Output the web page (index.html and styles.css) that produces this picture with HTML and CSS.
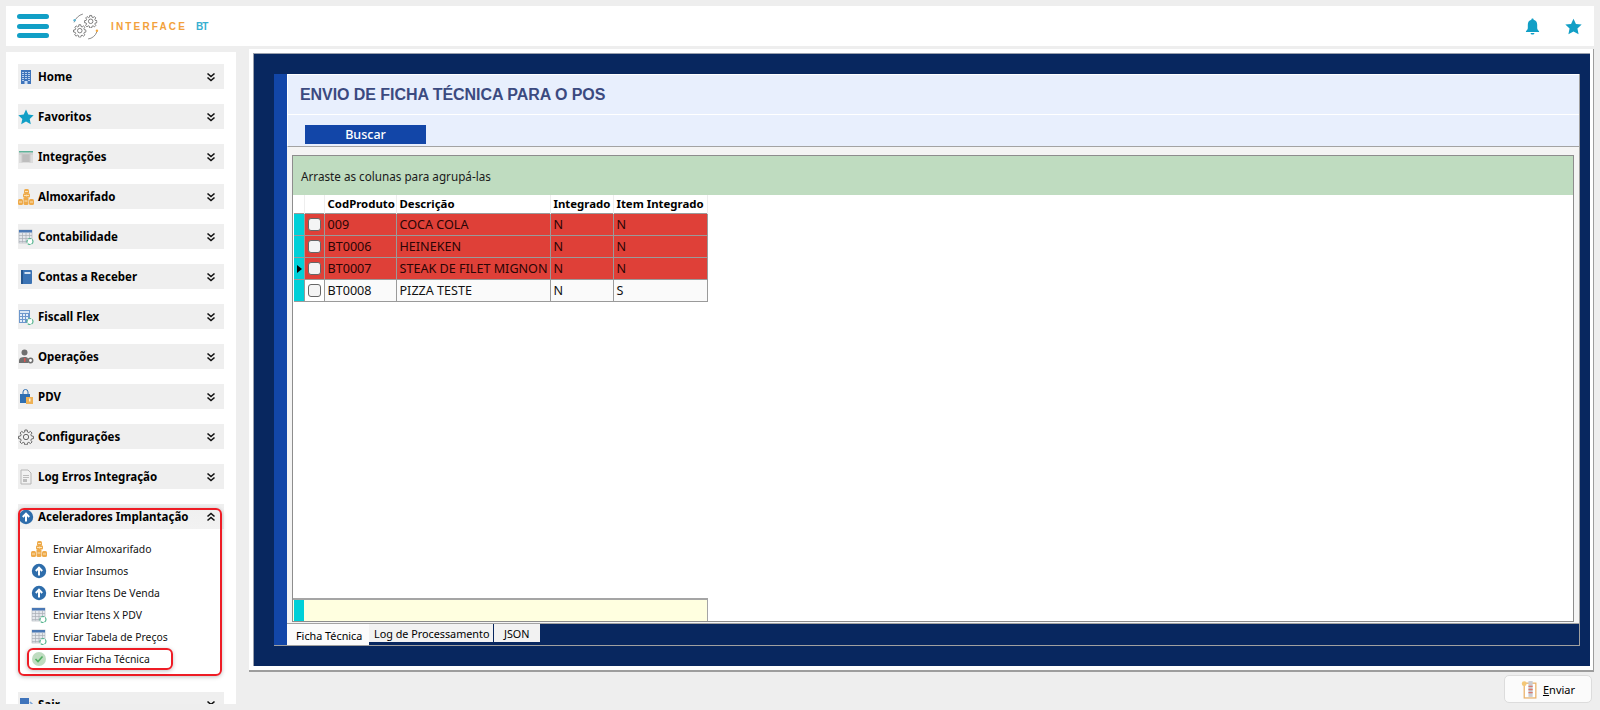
FILE: index.html
```html
<!DOCTYPE html>
<html lang="pt-BR">
<head>
<meta charset="utf-8">
<title>Interface BT</title>
<link rel="stylesheet" href="styles.css">
</head>
<body>
<svg class="sprites" xmlns="http://www.w3.org/2000/svg">
  <symbol id="i-chev-d" viewBox="0 0 10 10"><path d="M1.5 1.5 5 4.5 8.5 1.5M1.5 5.5 5 8.5 8.5 5.5" fill="none" stroke="#111" stroke-width="1.6"/></symbol>
  <symbol id="i-chev-u" viewBox="0 0 10 10"><path d="M1.5 4.5 5 1.5 8.5 4.5M1.5 8.5 5 5.5 8.5 8.5" fill="none" stroke="#111" stroke-width="1.6"/></symbol>
  <symbol id="i-building" viewBox="0 0 16 16"><rect x="3" y="1" width="10" height="14" fill="#3f74bb"/><path d="M4 3h2v1H4zM7 3h2v1H7zM10 3h2v1h-2zM4 5h2v1H4zM7 5h2v1H7zM10 5h2v1h-2zM4 7h2v1H4zM7 7h2v1H7zM10 7h2v1h-2zM4 9h2v1H4zM7 9h2v1H7zM10 9h2v1h-2zM4 11h2v1H4zM10 11h2v1h-2z" fill="#b9d0ee"/><rect x="6.500" y="12" width="3" height="3" fill="#cfe0f5"/></symbol>
  <symbol id="i-star" viewBox="0 0 16 16"><path d="M8 .6l2.300 5 5.400.6-4 3.700 1.100 5.400L8 12.600l-4.800 2.700 1.100-5.400-4-3.700 5.400-.6z" fill="#119fc6"/></symbol>
  <symbol id="i-grid" viewBox="0 0 16 16"><rect x="1" y="2" width="14" height="12" fill="#dcdcdc"/><rect x="1" y="2" width="14" height="1.500" fill="#5fb39a"/><rect x="4" y="5" width="8" height="8" fill="#bdbdbd"/><path d="M1 5h14M4 3.500v10M12 3.500v10" stroke="#c8c8c8" fill="none"/></symbol>
  <symbol id="i-coins" viewBox="0 0 16 16"><g fill="#eeaa4a"><rect x="6" y="0" width="5" height="5" rx="1.500"/><rect x="5" y="4.500" width="3.500" height="4" rx="1"/><rect x="8.500" y="4.500" width="3.500" height="4" rx="1"/><rect x="0" y="10" width="5" height="6" rx="1.500"/><rect x="5.500" y="8" width="5" height="8" rx="1.500"/><rect x="11" y="10" width="5" height="6" rx="1.500"/></g><path d="M7 2.500h3M6 6.500h5M1 13h3M6.500 12h3M12 13h3" stroke="#fbe3b8" fill="none"/></symbol>
  <symbol id="i-table" viewBox="0 0 16 16"><rect x="1" y="1" width="13" height="13" fill="#e4e7ec" stroke="#a9aeb6" stroke-width=".6"/><rect x="1" y="1" width="13" height="2.500" fill="#4a78b5"/><path d="M1 6.500h13M1 9.500h13M1 12.500h13M4.500 3.500v10M8 3.500v10M11.500 3.500v10" stroke="#a9aeb6" stroke-width=".7" fill="none"/><circle cx="12" cy="12.500" r="3" fill="#fff" stroke="#55b58e" stroke-width="1.200" stroke-dasharray="3 1"/></symbol>
  <symbol id="i-book" viewBox="0 0 16 16"><rect x="3" y="1" width="11" height="14" rx="1" fill="#3b73b4"/><rect x="3" y="1" width="2" height="14" fill="#25568f"/><rect x="6.500" y="3" width="6" height="2" fill="#d5e3f3"/></symbol>
  <symbol id="i-calc" viewBox="0 0 16 16"><rect x="1" y="1" width="11" height="13" fill="#6d97cc"/><rect x="2" y="2" width="9" height="2" fill="#d9e6f5"/><path d="M2 5h2v2H2zM5 5h2v2H5zM8 5h2v2H8zM2 8h2v2H2zM5 8h2v2H5zM8 8h2v2H8zM2 11h2v2H2zM5 11h2v2H5z" fill="#e4edf8"/><circle cx="12" cy="12.500" r="3" fill="#fff" stroke="#55b58e" stroke-width="1.200" stroke-dasharray="3 1"/></symbol>
  <symbol id="i-user" viewBox="0 0 16 16"><circle cx="6.500" cy="3.500" r="3" fill="#6f6f6f"/><path d="M1 14v-2.500C1 9 3 8 6.500 8S10 9 10 11v3z" fill="#6f6f6f"/><rect x="6" y="9" width="1.500" height="4" fill="#d9534f"/><circle cx="12.500" cy="11.500" r="2.200" fill="#fff" stroke="#6f6f6f" stroke-width="1.500"/></symbol>
  <symbol id="i-bag" viewBox="0 0 16 16"><path d="M5 5V3a2.500 2.500 0 015 0v2" fill="none" stroke="#2f6fb2"/><path d="M2 5h10v9H2z" fill="#2f6fb2"/><rect x="8" y="8" width="7" height="7" fill="#eeb155"/><rect x="11" y="9.500" width="1.500" height="3" fill="#fff2d8"/></symbol>
  <symbol id="i-gear" viewBox="0 0 24 24"><path d="M10.300 1.500h3.400l.5 3 2 .9 2.500-1.800 2.400 2.400-1.800 2.500.9 2 3 .5v3.400l-3 .5-.9 2 1.800 2.500-2.400 2.400-2.500-1.800-2 .9-.5 3h-3.400l-.5-3-2-.9-2.500 1.800-2.400-2.400 1.800-2.500-.9-2-3-.5v-3.400l3-.5.9-2L3.200 6l2.400-2.400 2.500 1.800 2-.9z" fill="none" stroke="#555" stroke-width="1.300"/><circle cx="12" cy="12" r="4" fill="none" stroke="#555" stroke-width="1.300"/></symbol>
  <symbol id="i-doc" viewBox="0 0 16 16"><path d="M3 1h7l3 3v11H3z" fill="#f2f2f2" stroke="#b5b5b5"/><path d="M5 6h6v1H5zM5 8h6v1H5zM5 10h4v3H5z" fill="#bcbcbc"/></symbol>
  <symbol id="i-up" viewBox="0 0 16 16"><circle cx="8" cy="8" r="7.200" fill="#2e6dab"/><path d="M8 12.500V5M4.800 8 8 4.600 11.200 8" fill="none" stroke="#fff" stroke-width="2"/></symbol>
  <symbol id="i-ok" viewBox="0 0 16 16"><circle cx="8" cy="8" r="7" fill="#bfdcc0"/><path d="M4.500 8 7 10.500 11.500 5.500" fill="none" stroke="#4fae5f" stroke-width="1.600"/></symbol>
  <symbol id="i-exit" viewBox="0 0 16 16"><path d="M2 1h9v14H2z" fill="#3f74bb"/><path d="M7 8h8M12 5l3 3-3 3" fill="none" stroke="#7aa5d8" stroke-width="1.600"/></symbol>
  <symbol id="i-bell" viewBox="0 0 16 18"><path d="M8 .5c.8 0 1.200.6 1.200 1.300C11.800 2.400 13 4.500 13 7v3.500c0 1.500 1 2.400 2 3.500v.8H1V14c1-1.100 2-2 2-3.500V7c0-2.500 1.200-4.600 3.800-5.200C6.800 1.100 7.200.5 8 .5z" fill="#119fc6"/><path d="M6 15.800h4c0 1-.9 1.700-2 1.700s-2-.7-2-1.700z" fill="#119fc6"/></symbol>
  <symbol id="i-send" viewBox="0 0 16 18"><rect x="3" y="3" width="11" height="14" fill="#fff" stroke="#e9b26a" stroke-width="1.200"/><rect x="7" y="1" width="4" height="15" fill="#c9ccd2"/><path d="M7 6h4M7 9h4M7 12h4" stroke="#d9776c" stroke-width="1.200"/><circle cx="3" cy="3.500" r="2.300" fill="#f3c777"/></symbol>
  <symbol id="i-logo" viewBox="0 0 26 26"><use href="#i-gear" x="11.500" y="1.500" width="13" height="13"/><use href="#i-gear" x="1" y="10.500" width="13" height="13"/><g fill="none" stroke="#777" stroke-width=".8"><path d="M2 9C3.500 5 6.500 2 10.500 1"/><path d="M15.500 25c4-.5 7-3 8.500-7"/></g><circle cx="2.500" cy="7" r="1.200" fill="#5db7d6"/><circle cx="24" cy="17" r="1.200" fill="#f0a63f"/></symbol>
</svg>

<header class="topbar">
  <div class="burger"><span></span><span></span><span></span></div>
  <svg class="logo"><use href="#i-logo"/></svg>
  <span class="brand">INTERFACE</span>
  <span class="brand-bt">BT</span>
  <div class="top-actions">
    <svg class="bell"><use href="#i-bell"/></svg>
    <svg class="top-star"><use href="#i-star"/></svg>
  </div>
</header>

<div class="layout">
  <nav class="sidebar">
    <div class="nav-head"><svg class="nav-icon"><use href="#i-building"/></svg><span class="nav-label">Home</span><svg class="chev"><use href="#i-chev-d"/></svg></div>
    <div class="nav-head"><svg class="nav-icon"><use href="#i-star"/></svg><span class="nav-label">Favoritos</span><svg class="chev"><use href="#i-chev-d"/></svg></div>
    <div class="nav-head"><svg class="nav-icon"><use href="#i-grid"/></svg><span class="nav-label">Integrações</span><svg class="chev"><use href="#i-chev-d"/></svg></div>
    <div class="nav-head"><svg class="nav-icon"><use href="#i-coins"/></svg><span class="nav-label">Almoxarifado</span><svg class="chev"><use href="#i-chev-d"/></svg></div>
    <div class="nav-head"><svg class="nav-icon"><use href="#i-table"/></svg><span class="nav-label">Contabilidade</span><svg class="chev"><use href="#i-chev-d"/></svg></div>
    <div class="nav-head"><svg class="nav-icon"><use href="#i-book"/></svg><span class="nav-label">Contas a Receber</span><svg class="chev"><use href="#i-chev-d"/></svg></div>
    <div class="nav-head"><svg class="nav-icon"><use href="#i-calc"/></svg><span class="nav-label">Fiscall Flex</span><svg class="chev"><use href="#i-chev-d"/></svg></div>
    <div class="nav-head"><svg class="nav-icon"><use href="#i-user"/></svg><span class="nav-label">Operações</span><svg class="chev"><use href="#i-chev-d"/></svg></div>
    <div class="nav-head"><svg class="nav-icon"><use href="#i-bag"/></svg><span class="nav-label">PDV</span><svg class="chev"><use href="#i-chev-d"/></svg></div>
    <div class="nav-head"><svg class="nav-icon"><use href="#i-gear"/></svg><span class="nav-label">Configurações</span><svg class="chev"><use href="#i-chev-d"/></svg></div>
    <div class="nav-head"><svg class="nav-icon"><use href="#i-doc"/></svg><span class="nav-label">Log Erros Integração</span><svg class="chev"><use href="#i-chev-d"/></svg></div>
    <div class="nav-group">
      <div class="nav-head nav-head-open"><svg class="nav-icon"><use href="#i-up"/></svg><span class="nav-label">Aceleradores Implantação</span><svg class="chev"><use href="#i-chev-u"/></svg></div>
      <ul class="sub">
        <li class="sub-item"><svg class="sub-icon"><use href="#i-coins"/></svg>Enviar Almoxarifado</li>
        <li class="sub-item"><svg class="sub-icon"><use href="#i-up"/></svg>Enviar Insumos</li>
        <li class="sub-item"><svg class="sub-icon"><use href="#i-up"/></svg>Enviar Itens De Venda</li>
        <li class="sub-item"><svg class="sub-icon"><use href="#i-table"/></svg>Enviar Itens X PDV</li>
        <li class="sub-item"><svg class="sub-icon"><use href="#i-table"/></svg>Enviar Tabela de Preços</li>
        <li class="sub-item"><svg class="sub-icon"><use href="#i-ok"/></svg>Enviar Ficha Técnica</li>
      </ul>
      <div class="mark mark-outer"></div>
      <div class="mark mark-inner"></div>
    </div>
    <div class="nav-head"><svg class="nav-icon"><use href="#i-exit"/></svg><span class="nav-label">Sair</span><svg class="chev"><use href="#i-chev-d"/></svg></div>
  </nav>

  <main class="main">
    <section class="frame">
      <div class="navy">
        <div class="box">
          <div class="strip"></div>
          <div class="content">
            <h1 class="title">ENVIO DE FICHA TÉCNICA PARA O POS</h1>
            <div class="toolbar"><button class="btn-search" type="button">Buscar</button></div>
            <div class="grid-wrap">
              <div class="grid">
                <div class="group-band">Arraste as colunas para agrupá-las</div>
                <div class="grid-body">
                  <table class="tbl">
                    <colgroup><col class="c-ind"><col class="c-chk"><col class="c-cod"><col class="c-desc"><col class="c-int"><col class="c-item"></colgroup>
                    <thead>
                      <tr><th></th><th></th><th>CodProduto</th><th>Descrição</th><th>Integrado</th><th>Item Integrado</th></tr>
                    </thead>
                    <tbody>
                      <tr class="r-red"><td class="ind"></td><td class="chk"><span class="box-check"></span></td><td>009</td><td>COCA COLA</td><td>N</td><td>N</td></tr>
                      <tr class="r-red"><td class="ind"></td><td class="chk"><span class="box-check"></span></td><td>BT0006</td><td>HEINEKEN</td><td>N</td><td>N</td></tr>
                      <tr class="r-red r-sel"><td class="ind"><span class="arrow"></span></td><td class="chk"><span class="box-check"></span></td><td>BT0007</td><td>STEAK DE FILET MIGNON</td><td>N</td><td>N</td></tr>
                      <tr class="r-plain"><td class="ind"></td><td class="chk"><span class="box-check"></span></td><td>BT0008</td><td>PIZZA TESTE</td><td>N</td><td>S</td></tr>
                    </tbody>
                  </table>
                  <div class="grid-foot"><span class="foot-ind"></span></div>
                </div>
              </div>
            </div>
            <div class="tabs">
              <span class="tab tab-active">Ficha Técnica</span>
              <span class="tab tab-log">Log de Processamento</span>
              <span class="tab tab-json">JSON</span>
            </div>
          </div>
        </div>
      </div>
    </section>
    <div class="actions">
      <button class="btn-send" type="button"><svg class="send-icon"><use href="#i-send"/></svg><span><u>E</u>nviar</span></button>
    </div>
  </main>
</div>
</body>
</html>
```

FILE: styles.css
```css
* { box-sizing: border-box; }
html, body { margin: 0; height: 710px; overflow: hidden; }
body {
  background: #eeeeee;
  font-family: "Noto Sans", "Open Sans", sans-serif;
  color: #000;
  padding: 6px 6px 0;
}
.sprites { display: none; }

/* top bar */
.topbar {
  height: 40px;
  background: #fff;
  display: flex;
  align-items: center;
  padding-left: 11px;
}
.burger { width: 32px; display: flex; flex-direction: column; gap: 4.500px; }
.burger span { display: block; height: 5px; border-radius: 3px; background: #119fc6; }
.logo { width: 27px; height: 27px; margin-left: 23px; }
.brand {
  margin-left: 12px;
  font: bold 10px "Liberation Sans", sans-serif;
  letter-spacing: 2.150px;
  color: #f2a13c;
}
.brand-bt {
  margin-left: 9px;
  font: bold 10px "Liberation Sans", sans-serif;
  letter-spacing: -1px;
  color: #37afd0;
}
.top-actions { margin-left: auto; display: flex; align-items: center; gap: 25px; padding-right: 12px; }
.bell { width: 15px; height: 17px; }
.top-star { width: 17px; height: 17px; }

/* layout */
.layout { display: flex; align-items: flex-start; }

/* sidebar */
.sidebar {
  width: 230px;
  height: 652px;
  margin-top: 6px;
  padding: 12px 12px 0;
  background: #fff;
  overflow: hidden;
  display: flex;
  flex-direction: column;
  gap: 15px;
  flex: none;
}
.nav-head {
  height: 25px;
  flex: none;
  background: #efefef;
  display: flex;
  align-items: center;
  width: 206px;
}
.nav-icon { width: 16px; height: 16px; flex: none; margin-right: 4px; }
.nav-label { font-size: 11.500px; font-weight: 700; white-space: nowrap; line-height: 25px; }
.chev { width: 10px; height: 10px; margin-left: auto; margin-right: 8px; flex: none; }
.nav-group { position: relative; height: 173px; flex: none; }
.nav-head-open { background: linear-gradient(#efefef, #f2f2f2); }
.sub { list-style: none; margin: 9px 0 0; padding: 0 0 0 13px; }
.sub-item {
  height: 22px;
  display: flex;
  align-items: center;
  font-size: 10.400px;
  white-space: nowrap;
  color: #111;
}
.sub-icon { width: 16px; height: 16px; margin-right: 6px; flex: none; }
.mark { position: absolute; border: 2px solid #ee1c25; box-shadow: 0 1px 4px rgba(0,0,0,.25); pointer-events: none; }
.mark-outer { left: 0; top: 4px; width: 204px; height: 168px; border-radius: 6px; }
.mark-inner { left: 9px; top: 144px; width: 146px; height: 22px; border-radius: 6px; }

/* main */
.main { margin: 3px 0 0 13px; width: 1347px; }
.frame {
  height: 623px;
  background: #fff;
  border-bottom: 2px solid #9d9d9d;
  border-right: 1px solid #9d9d9d;
  padding: 4px 3px 4px 4px;
}
.navy {
  height: 613px;
  background: #08275f;
  border-left: 1px solid #9aa0ad;
  border-top: 1px solid #9aa0ad;
  padding: 20px 10px 20px 20px;
}
.box { height: 572px; display: flex; border-right: 1px solid #a0a0a0; border-bottom: 1px solid #a0a0a0; }
.strip { width: 13px; background: #1246a8; flex: none; }
.content { flex: 1; min-width: 0; display: flex; flex-direction: column; }
.title {
  margin: 0;
  height: 42px;
  background: #e8effd;
  border-bottom: 1px solid #fff;
  border-left: 1px solid #fff;
  border-top: 1px solid #fff;
  padding-left: 12px;
  display: flex;
  align-items: center;
  font: bold 16px "Liberation Sans", sans-serif;
  letter-spacing: -0.06px;
  color: #3b4a80;
  white-space: nowrap;
}
.toolbar {
  height: 32px;
  background: #e8effd;
  border-left: 1px solid #fff;
  border-bottom: 1px solid #a3a3a3;
  padding: 10px 0 0 17px;
}
.btn-search {
  display: block;
  width: 121px;
  height: 19px;
  border: 0;
  padding: 0;
  background: #1246a8;
  color: #fff;
  font: 500 12.500px "Noto Sans", sans-serif;
}
.grid-wrap { height: 476px; background: #f4f4f4; padding: 8px 5px 1px; flex: none; }
.grid {
  height: 467px;
  background: #fff;
  border: 1px solid #8d8d8d;
  display: flex;
  flex-direction: column;
}
.group-band {
  height: 39px;
  background: #bfdcc0;
  padding-left: 8px;
  display: flex;
  align-items: center;
  font-size: 11.700px;
  color: #1a1a1a;
  flex: none;
}
.grid-body { flex: 1; display: flex; flex-direction: column; justify-content: space-between; }
.tbl { border-collapse: collapse; table-layout: fixed; width: 413px; font-size: 12.600px; margin-left: 1px; }
.c-ind { width: 10px; }
.c-chk { width: 20px; }
.c-cod { width: 72px; }
.c-desc { width: 154px; }
.c-int { width: 63px; }
.c-item { width: 94px; }
.tbl th {
  height: 18px;
  padding: 0 0 0 3px;
  text-align: left;
  font-size: 11.400px;
  font-weight: 700;
  line-height: 18px;
  white-space: nowrap;
  border-right: 1px solid #eee;
}
.tbl td {
  height: 22px;
  padding: 0 0 0 3px;
  white-space: nowrap;
  overflow: hidden;
  border: 1px solid #9a9a9a;
}
.r-red td { background: #df4038; color: #2a0505; }
.r-plain td { background: #fafafa; color: #111; }
.tbl td.ind { background: #00d0d8; padding: 0; position: relative; border-left: 0; }
.tbl td.chk { background: none; padding: 0 0 0 3px; }
.r-red td.chk { background: #df4038; }
.r-sel td { border-top: 1px dotted #1aa; border-bottom: 1px dotted #1aa; }
.box-check {
  display: block;
  width: 13px;
  height: 13px;
  background: #f4f4f4;
  border: 1px solid #666;
  border-radius: 3px;
}
.arrow {
  display: block;
  width: 0;
  height: 0;
  margin-left: 3px;
  border-left: 5px solid #000;
  border-top: 4px solid transparent;
  border-bottom: 4px solid transparent;
}
.grid-foot {
  width: 415px;
  height: 23px;
  background: #ffffe0;
  border-top: 2px solid #a5a5a5;
  border-right: 1px solid #a5a5a5;
  padding-left: 1px;
  display: flex;
}
.foot-ind { width: 10px; background: #00d0d8; }
.tabs { flex: 1; background: #08275f; display: flex; align-items: flex-start; border-top: 1px solid #a3a3a3; font-size: 10.800px; }
.tab { background: #f2f2f2; height: 18px; padding-left: 5px; display: flex; align-items: center; white-space: nowrap; margin-right: 1px; }
.tab-active { background: #fbfbfb; width: 82px; height: 21px; padding-left: 9px; margin-right: 0; padding-top: 2px; }
.tab-log { width: 124px; }
.tab-json { width: 46px; padding-left: 10px; }

/* actions */
.actions { display: flex; justify-content: flex-end; padding: 3px 2px 0 0; }
.btn-send {
  width: 88px;
  height: 28px;
  background: #fbfbfb;
  border: 1px solid #dcdcdc;
  border-radius: 5px;
  display: flex;
  align-items: center;
  justify-content: center;
  gap: 5px;
  font: 11px "Noto Sans", sans-serif;
  padding: 0;
}
.send-icon { width: 17px; height: 19px; }
```
